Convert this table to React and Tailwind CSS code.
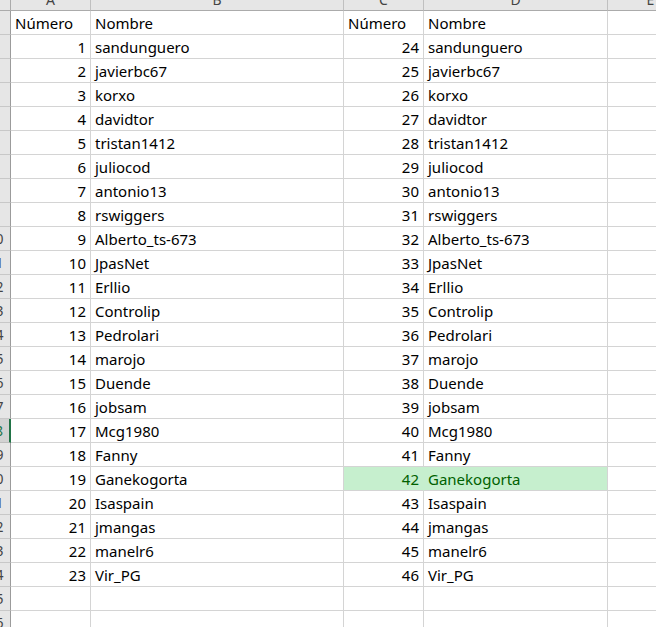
import React from "react";

const names = [
  "sandunguero", "javierbc67", "korxo", "davidtor", "tristan1412", "juliocod",
  "antonio13", "rswiggers", "Alberto_ts-673", "JpasNet", "Erllio", "Controlip",
  "Pedrolari", "marojo", "Duende", "jobsam", "Mcg1980", "Fanny", "Ganekogorta",
  "Isaspain", "jmangas", "manelr6", "Vir_PG",
];

const cols = ["A", "B", "C", "D", "E"];

const cell = "h-[24px] border-r border-b border-[#d4d4d4] px-[4px] pt-[1px] leading-[23px] whitespace-nowrap overflow-hidden text-[15px] text-black";

const RowHead = ({n, selected}) => (
    <div className={`h-[24px] border-r border-b text-center leading-[23px] text-[14px] ${selected ? 'bg-[#d2d2d2] border-r-2 border-r-[#217346] border-b-[#bdbdbd] text-[#217346]' : 'bg-[#e6e6e6] border-r-[#9b9b9b] border-b-[#c8c8c8] text-[#444]'}`}>
        {n}
    </div>
);

export default function App() {
    const rows = [];
    for (let r = 1; r <= 26; r++) {
        let a = "", b = "", c = "", d = "";
        if (r === 1) {
            a = "Número"; b = "Nombre"; c = "Número"; d = "Nombre";
        } else if (r <= 24) {
            a = r - 1; b = names[r - 2]; c = r - 1 + 23; d = names[r - 2];
        }
        const head = r === 1;
        // highlighted duplicate (Ganekogorta)
        const hl = r === 20;
        rows.push(
            <React.Fragment key={r}>
                <RowHead n={r} selected={r === 18} />
                <div className={`${cell} ${head ? '' : 'text-right'}`}>{a}</div>
                <div className={cell}>{b}</div>
                <div className={`${cell} ${head ? '' : 'text-right'} ${hl ? 'bg-[#c6efce] !text-[#006100] border-r-[#c6efce]' : ''}`}>{c}</div>
                <div className={`${cell} ${hl ? 'bg-[#c6efce] !text-[#006100]' : ''}`}>{d}</div>
                <div className={cell}></div>
            </React.Fragment>
        );
    }

    return (
        <div className="w-[656px] h-[627px] overflow-hidden bg-white" style={{fontFamily: '"Noto Sans", "Open Sans", sans-serif'}}>
            <div className="-ml-[19px] -mt-[11px] w-[720px] grid grid-cols-[30px_80px_253px_80px_184px_86px]">
                <div className="h-[22px] bg-[#e6e6e6] border-r border-b border-[#ababab]"></div>
                {cols.map(c => (
                    <div key={c} className="h-[22px] bg-[#e6e6e6] border-r border-b border-r-[#c0c0c0] border-b-[#ababab] text-center text-[14px] leading-[22px] text-[#444]">
                        {c}
                    </div>
                ))}
                {rows}
            </div>
        </div>
    );
}
